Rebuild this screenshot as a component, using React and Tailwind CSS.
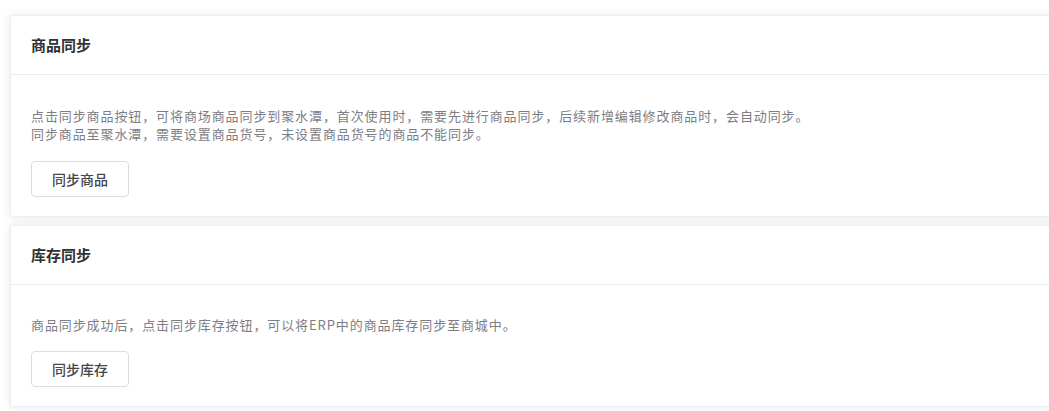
import React from "react";

const font = { fontFamily: '"PingFang SC","Noto Sans CJK SC","Noto Sans",sans-serif' };

function Card({ title, lines, button, pt, gap }) {
  return (
    <div className="bg-white border border-[#ececf3] rounded-[3px] shadow-[0_0_10px_rgba(30,30,60,0.1)]">
      <div className="h-[59px] flex items-center px-[20px] border-b border-[#ebebf3]">
        <span className="text-[15px] font-bold text-[#303133]">{title}</span>
      </div>
      <div className={`${pt} px-[20px] pb-[19px]`}>
        <div className="text-[13px] tracking-[0.9px] leading-[18px] text-[#7d7d84]">
          {lines.map((l, i) => (
            <div key={i}>{l}</div>
          ))}
        </div>
        <button className={`${gap} block w-[98px] h-[36px] border border-[#dcdce6] rounded-[4px] bg-white text-[14px] text-[#46464b] font-medium`}>
          {button}
        </button>
      </div>
    </div>
  );
}

export default function App() {
  return (
    <div className="w-[1049px] h-[411px] overflow-hidden bg-white" style={font}>
      <div className="pl-[10px] pt-[15px] w-[1070px] flex flex-col gap-[8px]">
        <Card
          title="商品同步"
          pt="pt-[32px]"
          gap="mt-[18px]"
          lines={[
            "点击同步商品按钮，可将商场商品同步到聚水潭，首次使用时，需要先进行商品同步，后续新增编辑修改商品时，会自动同步。",
            "同步商品至聚水潭，需要设置商品货号，未设置商品货号的商品不能同步。",
          ]}
          button="同步商品"
        />
        <Card
          title="库存同步"
          pt="pt-[31px]"
          gap="mt-[17px]"
          lines={["商品同步成功后，点击同步库存按钮，可以将ERP中的商品库存同步至商城中。"]}
          button="同步库存"
        />
      </div>
    </div>
  );
}
